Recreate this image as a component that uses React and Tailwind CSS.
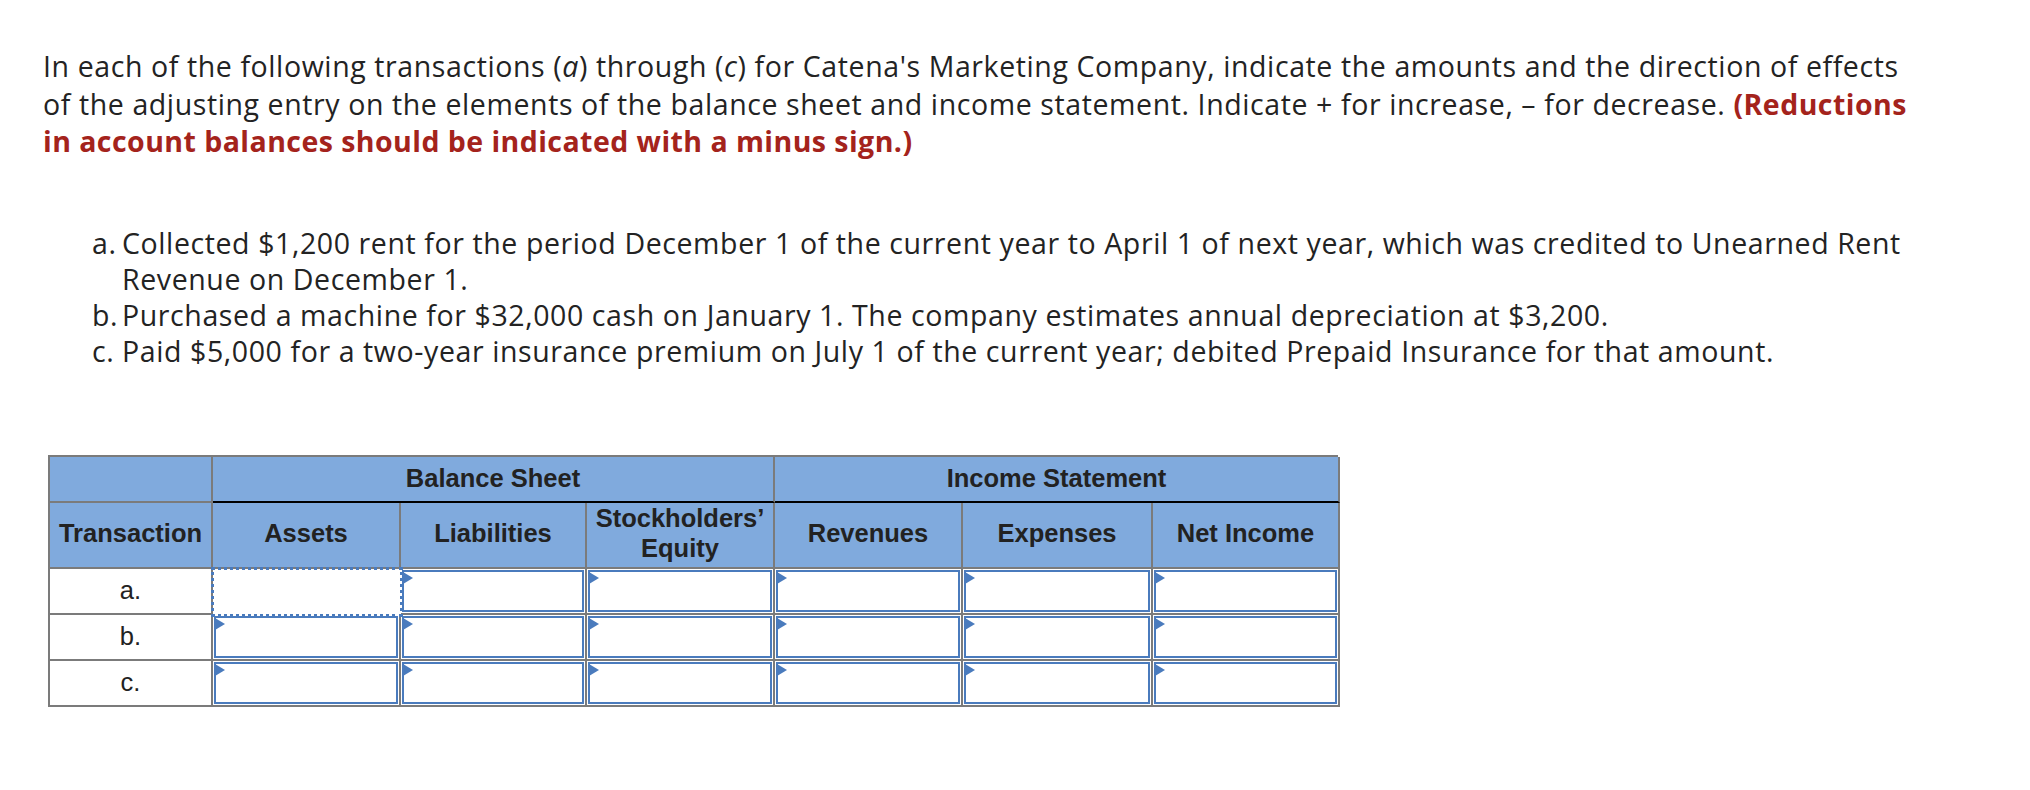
import React from "react";

const headers = ["Assets", "Liabilities", "Stockholders’\nEquity", "Revenues", "Expenses", "Net Income"];
const rows = ["a.", "b.", "c."];

function InputCell({ focused }) {
  if (focused) {
    return (
      <div className="relative z-10 border-b-2 border-r-2 border-white bg-white outline-[3px] outline-dotted outline-offset-[-1px] outline-[#4a7bbd]" />
    );
  }
  return (
    <div className="border-b-2 border-r-2 border-[#7b7b7b] bg-white p-px">
      <div className="relative h-full border-2 border-[#4a7bbd]">
        <span className="absolute -left-px top-0 h-0 w-0 border-y-[6.5px] border-l-[10px] border-y-transparent border-l-[#4a7bbd]" />
      </div>
    </div>
  );
}

function EffectsTable() {
  return (
    <div
      className="grid w-[1290px] grid-cols-[163px_188px_186px_188px_188px_190px_187px] grid-rows-[46px_66px_46px_46px_46px] border-l-2 border-t-2 border-[#7b7b7b] text-[#222]"
      style={{ fontFamily: '"Liberation Sans", Arial, sans-serif' }}
    >
      <div className="border-b-2 border-r-2 border-[#7b7b7b] bg-[#80aadd]" />
      <div className="col-span-3 flex items-center justify-center border-b-2 border-r-2 border-b-black border-r-[#7b7b7b] bg-[#80aadd] text-[25.5px] font-bold">
        Balance Sheet
      </div>
      <div className="col-span-3 flex items-center justify-center border-b-2 border-r-2 border-b-black border-r-[#7b7b7b] bg-[#80aadd] text-[25.5px] font-bold">
        Income Statement
      </div>

      <div className="flex items-center justify-center border-b-2 border-r-2 border-[#7b7b7b] bg-[#80aadd] pb-[3px] text-[25.5px] font-bold">
        Transaction
      </div>
      {headers.map((h) => (
        <div
          key={h}
          className="flex items-center justify-center whitespace-pre-line border-b-2 border-r-2 border-[#7b7b7b] bg-[#80aadd] pb-[3px] text-center text-[25.5px] font-bold leading-[30px]"
        >
          {h}
        </div>
      ))}

      {rows.map((r, ri) => (
        <React.Fragment key={r}>
          <div className="flex items-center justify-center border-b-2 border-r-2 border-[#7b7b7b] bg-white text-[25.5px]">
            {r}
          </div>
          {headers.map((h, ci) => (
            <InputCell key={h} focused={ri === 0 && ci === 0} />
          ))}
        </React.Fragment>
      ))}
    </div>
  );
}

export default function App() {
  return (
    <div className="min-h-[790px] w-[2030px] bg-white text-[#232323]" style={{ fontFamily: '"Open Sans", sans-serif' }}>
      <div className="pl-[43px] pt-[48px]">
        <p className="whitespace-nowrap text-[28.5px] leading-[37.5px] tracking-[0.6px]">
          In each of the following transactions (<i>a</i>) through (<i>c</i>) for Catena's Marketing Company, indicate the amounts and the direction of effects
          <br />
          of the adjusting entry on the elements of the balance sheet and income statement. Indicate + for increase, – for decrease.{" "}
          <strong className="tracking-[0.45px] text-[#a4231c]">
            (Reductions
            <br />
            in account balances should be indicated with a minus sign.)
          </strong>
        </p>

        <div className="mt-[64px] w-[1887px] pl-[49px] text-[28.5px] leading-[36px] tracking-[0.6px]">
          <div className="flex">
            <span className="w-[30px] shrink-0">a.</span>
            <span>
              Collected $1,200 rent for the period December 1 of the current year to April 1 of next year, which was credited to Unearned Rent Revenue on December 1.
            </span>
          </div>
          <div className="flex">
            <span className="w-[30px] shrink-0">b.</span>
            <span>Purchased a machine for $32,000 cash on January 1. The company estimates annual depreciation at $3,200.</span>
          </div>
          <div className="flex">
            <span className="w-[30px] shrink-0">c.</span>
            <span>Paid $5,000 for a two-year insurance premium on July 1 of the current year; debited Prepaid Insurance for that amount.</span>
          </div>
        </div>

        <div className="ml-[5px] mt-[86px]">
          <EffectsTable />
        </div>
      </div>
    </div>
  );
}
